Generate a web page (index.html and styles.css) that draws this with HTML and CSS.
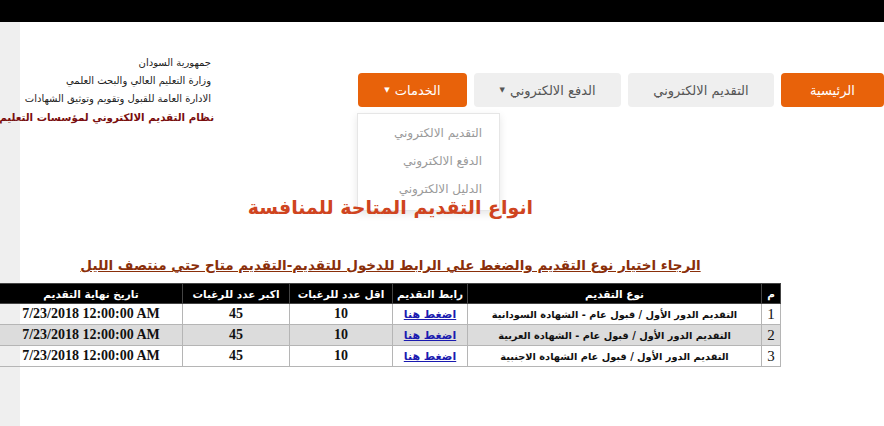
FILE: index.html
```html
<!DOCTYPE html>
<html lang="ar">
<head>
<meta charset="utf-8">
<title>نظام التقديم الالكتروني</title>
<link rel="stylesheet" href="styles.css">
</head>
<body>
<div class="topbar"></div>
<div class="page">
  <header class="header">
    <nav class="nav">
      <a class="btn btn-orange w-home">الرئيسية</a>
      <a class="btn btn-gray w-apply">التقديم الالكتروني</a>
      <a class="btn btn-gray w-pay">الدفع الالكتروني <span class="caret">▼</span></a>
      <div class="drop-wrap">
        <a class="btn btn-orange w-serv">الخدمات <span class="caret">▼</span></a>
        <ul class="dropdown">
          <li>التقديم الالكتروني</li>
          <li>الدفع الالكتروني</li>
          <li>الدليل الالكتروني</li>
        </ul>
      </div>
    </nav>
    <div class="logo">
      <div class="l1">جمهورية السودان</div>
      <div class="l2">وزارة التعليم العالي والبحث العلمي</div>
      <div class="l3">الادارة العامة للقبول وتقويم وتوثيق الشهادات</div>
      <div class="l4">نظام التقديم الالكتروني لمؤسسات التعليم</div>
    </div>
  </header>
  <main class="main">
    <h1 class="title">انواع التقديم المتاحة للمنافسة</h1>
    <h2 class="subtitle">الرجاء اختيار نوع التقديم والضغط علي الرابط للدخول للتقديم-التقديم متاح حتي منتصف الليل</h2>
    <table class="grid">
      <thead>
        <tr>
          <th class="c-n">م</th>
          <th class="c-type">نوع التقديم</th>
          <th class="c-link">رابط التقديم</th>
          <th class="c-min">اقل عدد للرغبات</th>
          <th class="c-max">اكبر عدد للرغبات</th>
          <th class="c-date">تاريخ نهاية التقديم</th>
        </tr>
      </thead>
      <tbody>
        <tr>
          <td class="num">1</td>
          <td class="type">التقديم الدور الأول / قبول عام - الشهادة السودانية</td>
          <td class="link"><a href="#">اضغط هنا</a></td>
          <td class="val">10</td>
          <td class="val">45</td>
          <td class="date">7/23/2018 12:00:00 AM</td>
        </tr>
        <tr class="alt">
          <td class="num">2</td>
          <td class="type">التقديم الدور الأول / قبول عام - الشهادة العربية</td>
          <td class="link"><a href="#">اضغط هنا</a></td>
          <td class="val">10</td>
          <td class="val">45</td>
          <td class="date">7/23/2018 12:00:00 AM</td>
        </tr>
        <tr>
          <td class="num">3</td>
          <td class="type">التقديم الدور الأول / قبول عام الشهادة الاجنبية</td>
          <td class="link"><a href="#">اضغط هنا</a></td>
          <td class="val">10</td>
          <td class="val">45</td>
          <td class="date">7/23/2018 12:00:00 AM</td>
        </tr>
      </tbody>
    </table>
  </main>
</div>
</body>
</html>
```
FILE: styles.css
```css
* { box-sizing: border-box; }
html, body { margin: 0; padding: 0; }
body {
  width: 884px;
  height: 426px;
  overflow: hidden;
  font-family: "DejaVu Sans", "Liberation Sans", sans-serif;
  background: linear-gradient(to right, #efefef 20px, #ffffff 20px);
}
.topbar { height: 22px; background: #000; }
.page { position: relative; }

.header {
  display: flex;
  flex-direction: row-reverse;
  justify-content: space-between;
  align-items: flex-start;
  height: 140px;
}
.nav {
  direction: rtl;
  display: flex;
  gap: 7px;
  margin-top: 51px;
}
.btn {
  display: flex;
  align-items: center;
  justify-content: center;
  height: 34px;
  border-radius: 4px;
  font-size: 13px;
  text-decoration: none;
  cursor: pointer;
}
.btn-orange { background: #e8620a; color: #fff; }
.btn-gray { background: #efefef; color: #555; }
.w-home { width: 103px; }
.w-apply { width: 146px; }
.w-pay { width: 147px; }
.w-serv { width: 109px; }
.caret { font-size: 7px; margin-right: 5px; }
.drop-wrap { position: relative; }
.dropdown {
  position: absolute;
  top: 40px;
  left: -1px;
  width: 143px;
  margin: 0;
  padding: 6px 0;
  list-style: none;
  background: #fff;
  border: 1px solid #e6e6e6;
  box-shadow: 0 3px 8px rgba(0,0,0,0.10);
  z-index: 1;
}
.dropdown li {
  height: 28px;
  line-height: 26px;
  padding-right: 17px;
  font-size: 12px;
  color: #9a9a9a;
  text-align: right;
}

.logo {
  direction: rtl;
  text-align: right;
  margin-top: 32px;
  width: 214px;
  color: #222;
  font-size: 10px;
  line-height: 18px;
}
.logo .l1, .logo .l2, .logo .l3 { margin-right: 3px; }
.logo .l4 {
  font-size: 10.3px;
  font-weight: bold;
  color: #7a0e0e;
  white-space: nowrap;
  line-height: 18px;
}

.main {
  direction: rtl;
  width: 781px;
  text-align: center;
}
.title {
  position: relative;
  z-index: 2;
  margin: 28px 0 0;
  height: 35px;
  font-size: 19px;
  font-weight: bold;
  color: #cf4420;
  line-height: 35px;
}
.subtitle {
  margin: 28px 0 0;
  height: 24px;
  font-size: 13.5px;
  font-weight: bold;
  color: #8a2f0a;
  text-decoration: underline;
  line-height: 24px;
  white-space: nowrap;
}
.grid {
  margin-top: 6px;
  width: 781px;
  border-collapse: collapse;
  direction: rtl;
  table-layout: fixed;
  border: 1px solid #8c8c8c;
}
.grid th {
  background: #000;
  color: #fff;
  font-size: 10.5px;
  font-weight: bold;
  height: 20px;
  padding: 0;
  border: 1px solid #444;
}
.grid td {
  height: 21px;
  padding: 0 4px;
  border: 1px solid #b5b5b5;
  font-size: 11px;
  color: #111;
}
.grid tr.alt td { background: #dcdcdc; }
.c-n { width: 19px; }
.c-type { width: 294px; }
.c-link { width: 75px; }
.c-min { width: 103px; }
.c-max { width: 107px; }
.c-date { width: 183px; }
td.num { font-family: "Liberation Serif", serif; font-size: 15px; text-align: center; padding: 0; }
td.type { font-weight: bold; text-align: center; font-size: 9.8px; }
td.link { text-align: center; }
td.link a { color: #1b1bb0; font-weight: bold; font-size: 11px; }
td.val { font-family: "Liberation Serif", serif; font-weight: bold; font-size: 14px; text-align: center; }
td.date { font-family: "Liberation Serif", serif; font-weight: bold; font-size: 14px; text-align: center; direction: ltr; }
```
